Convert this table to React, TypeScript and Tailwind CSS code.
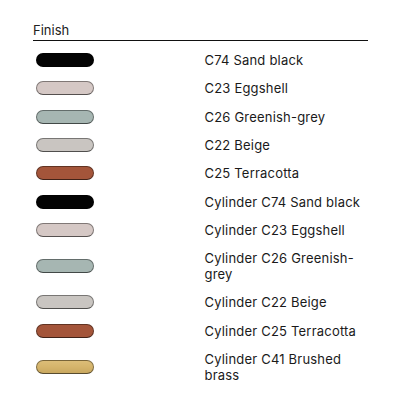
import React from "react";

const items: { name: string; color: string; brass?: boolean }[] = [
  { name: "C74 Sand black", color: "#030303" },
  { name: "C23 Eggshell", color: "#d5c8c5" },
  { name: "C26 Greenish-grey", color: "#a6b6b2" },
  { name: "C22 Beige", color: "#c9c5c1" },
  { name: "C25 Terracotta", color: "#a4553a" },
  { name: "Cylinder C74 Sand black", color: "#030303" },
  { name: "Cylinder C23 Eggshell", color: "#d5c8c5" },
  { name: "Cylinder C26 Greenish-grey", color: "#a6b6b2" },
  { name: "Cylinder C22 Beige", color: "#c9c5c1" },
  { name: "Cylinder C25 Terracotta", color: "#a4553a" },
  { name: "Cylinder C41 Brushed brass", color: "#d6b56c", brass: true },
];

export default function App() {
  return (
    <div
      className="w-[420px] h-[418px] bg-white pt-[22px] px-[33px] text-[#1a1a1a]"
      style={{ fontFamily: "Inter, 'Liberation Sans', sans-serif" }}
    >
      <div className="w-[335px]">
        <div className="text-[13px] leading-[16px] pb-[2px] text-[#222] border-b border-[#111]">Finish</div>
        <div className="pt-[5px]">
          {items.map((it) => (
            <div key={it.name} className="grid grid-cols-2 items-center py-[6.15px]">
              <div className="pl-[3px]">
                <div
                  className="w-[58px] h-[14px] rounded-full border border-[#00000066] border-b-[#00000099]"
                  style={{
                    background: it.brass
                      ? "linear-gradient(180deg,#dcbd78 0%,#d5b46b 50%,#c9a85f 100%)"
                      : it.color,
                  }}
                />
              </div>
              <div className="pl-[4px] text-[13px] leading-[16px] tracking-[0.2px] pr-[2px]">{it.name}</div>
            </div>
          ))}
        </div>
      </div>
    </div>
  );
}
